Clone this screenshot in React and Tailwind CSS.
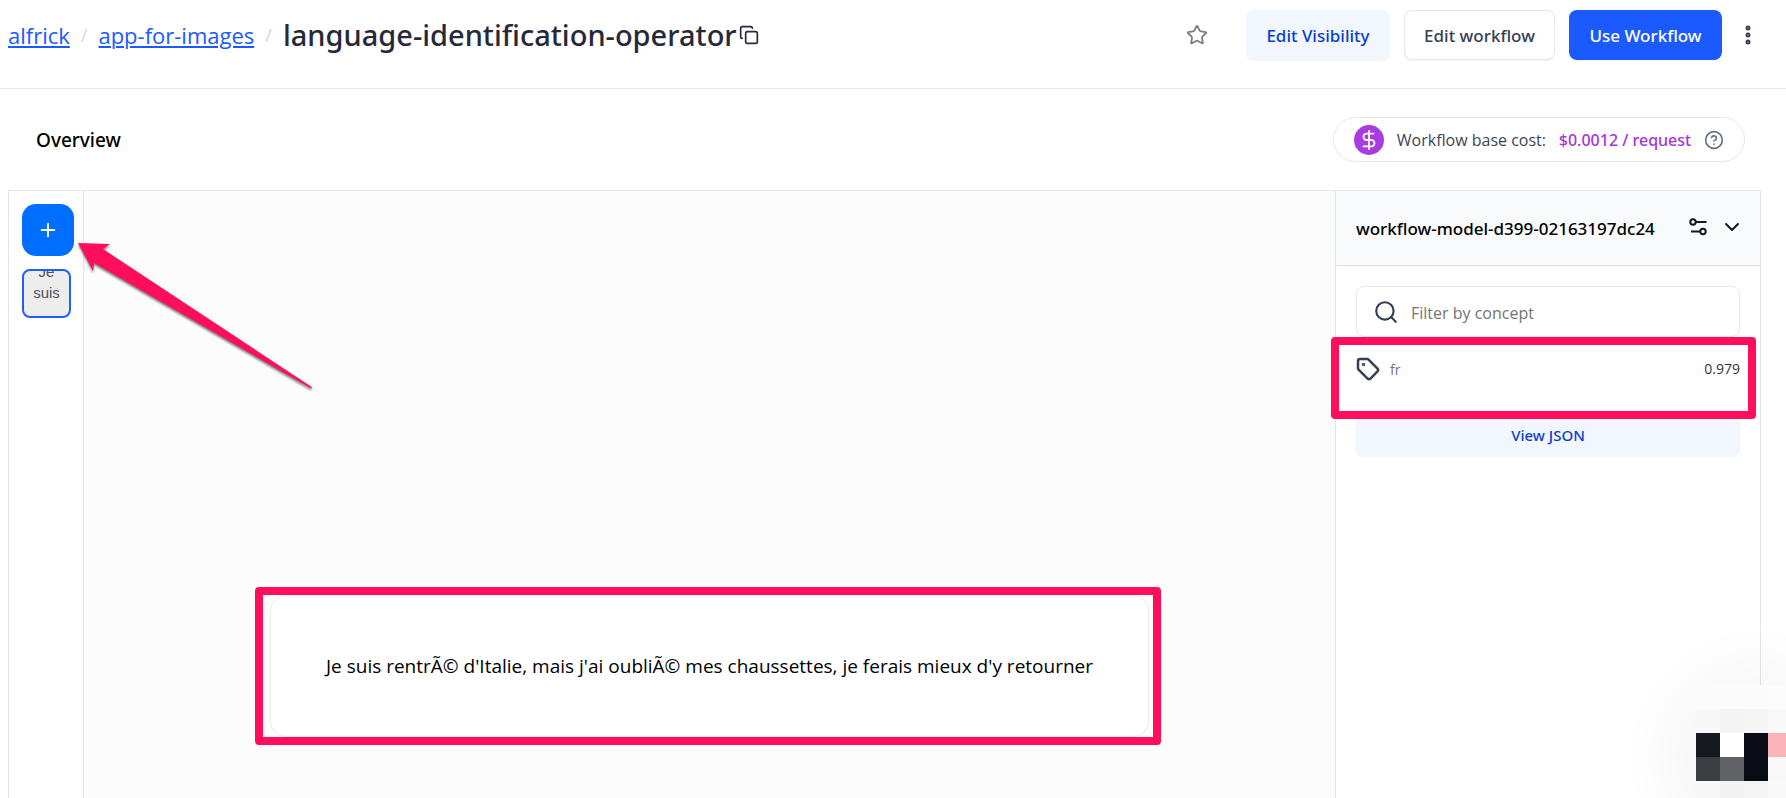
import { Star, Copy, EllipsisVertical, CircleHelp, DollarSign, Plus, ChevronDown, Search, Tag } from "lucide-react";

const mosaic = [
  ["bg-[#fbfbfb]", "bg-[#fbfbfb]", "bg-[#fbfbfb]", "bg-[#fcfcfc]"],
  ["bg-[#f7f7f7]", "bg-[#f3f3f3]", "bg-[#f5f5f5]", "bg-[#f9f9f9]"],
  ["bg-[#171921]", "bg-white", "bg-[#090c14]", "bg-[#fab4b7]"],
  ["bg-[#3c3d42]", "bg-[#616267]", "bg-[#090c14]", "bg-[#f8f8f8]"],
  ["bg-[#f7f7f7]", "bg-[#f2f2f2]", "bg-[#f5f5f5]", "bg-[#f9f9f9]"],
];

function Header() {
  return (
    <header className="flex h-[89px] items-start justify-between border-b border-[#e8e8ea] pt-[10px] pr-[26px] pl-2">
      <nav aria-label="Breadcrumb" className="flex h-[50px] items-center gap-[11px] text-[22px] whitespace-nowrap">
        <a href="#alfrick" className="text-[#1a5aff] underline decoration-2 underline-offset-2">alfrick</a>
        <span className="text-lg text-[#d6d6da]">/</span>
        <a href="#app" className="text-[#1a5aff] underline decoration-2 underline-offset-2">app-for-images</a>
        <span className="text-lg text-[#d6d6da]">/</span>
        <div className="flex items-center gap-0.5">
          <h1 className="font-['Noto_Sans',sans-serif] text-[29px] font-medium text-[#272838]">language-identification-operator</h1>
          <button aria-label="Copy"><Copy className="size-5 text-[#272838]" /></button>
        </div>
      </nav>
      <div className="flex items-center gap-[14px] font-['Noto_Sans',sans-serif] text-[17px] font-medium whitespace-nowrap">
        <button aria-label="Star" className="mr-6"><Star className="size-[22px] text-[#7d7d7d]" /></button>
        <button className="h-[50px] w-[144px] rounded-lg bg-[#f1f6ff] pt-0.5 text-[#0a3fcf] shadow-xs">Edit Visibility</button>
        <button className="h-[50px] w-[151px] rounded-lg border border-[#e5e7eb] bg-white pt-0.5 text-[#344054] shadow-xs">Edit workflow</button>
        <button className="h-[50px] w-[153px] rounded-lg bg-[#1a5aff] pt-0.5 text-white">Use Workflow</button>
        <button aria-label="More"><EllipsisVertical className="size-6 text-[#344054]" strokeWidth={3} /></button>
      </div>
    </header>
  );
}

function SlidersIcon() {
  return (
    <svg aria-hidden="true" viewBox="0 0 20 20" className="size-5" fill="none" stroke="currentColor" strokeWidth="2">
      <circle cx="5" cy="5" r="2.700" />
      <path d="M7.700 5h10.800M3 14.500h9.500" />
      <circle cx="15" cy="14.500" r="2.700" />
    </svg>
  );
}

function ConceptPanel() {
  return (
    <aside className="w-[425px] shrink-0 border-l border-[#e2e4e9]">
      <div className="flex h-[75px] items-center justify-between border-b border-[#dcdfea] bg-[#f8fafc] px-5">
        <h2 className="pt-0.5 font-['Noto_Sans',sans-serif] text-[17px] font-medium text-black">workflow-model-d399-02163197dc24</h2>
        <div className="-mr-1 flex items-center gap-3 pb-0.5 text-[#111827]">
          <button aria-label="Settings"><SlidersIcon /></button>
          <button aria-label="Collapse"><ChevronDown className="size-6" /></button>
        </div>
      </div>
      <div className="px-5 pt-5">
        <label className="flex h-[51px] items-center gap-3 rounded-lg border border-[#e5e7eb] px-4">
          <Search className="size-[26px] text-[#344054]" />
          <input aria-label="Filter by concept" placeholder="Filter by concept" className="min-w-0 flex-1 pt-0.5 text-base outline-none placeholder:text-[#757575]" />
        </label>
        <div className="relative flex h-[75px] items-start justify-between pt-5">
          <div className="flex items-center gap-[10px]">
            <Tag className="size-6 text-[#344054]" strokeWidth={2.5} />
            <span className="pt-0.5 text-sm text-[#697586]">fr</span>
          </div>
          <span className="text-sm leading-6 text-[#2c3442]">0.979</span>
          <div className="pointer-events-none absolute -inset-x-[25px] top-0 -right-4 h-[82px] rounded border-8 border-[#ff0f5b]" />
        </div>
        <button className="h-11 w-full rounded-lg bg-[#f1f6ff] pt-0.5 font-['Noto_Sans',sans-serif] text-[15px] font-medium text-[#0a3fcf] shadow-xs">View JSON</button>
      </div>
    </aside>
  );
}

export default function App() {
  return (
    <div className="relative flex h-screen flex-col overflow-hidden bg-white font-['Open_Sans','Noto_Sans',sans-serif]">
      <Header />
      <div className="flex h-[101px] shrink-0 items-center justify-between pr-[41px] pl-9">
        <h2 className="pt-0.5 font-['Noto_Sans',sans-serif] text-[19px] font-medium text-black">Overview</h2>
        <div className="flex h-[45px] w-[412px] items-center justify-between rounded-full border border-[#e5e7eb] px-5 text-base whitespace-nowrap">
          <span className="flex size-[30px] items-center justify-center rounded-full bg-[#a93be0]">
            <DollarSign className="size-[22px] text-white" />
          </span>
          <span className="text-[#3c4656]">Workflow base cost:</span>
          <span className="font-['Noto_Sans',sans-serif] font-medium text-[#a335da]">$0.0012 / request</span>
          <CircleHelp className="size-5 text-[#667085]" />
        </div>
      </div>
      <div className="mr-[25px] ml-2 flex flex-1 border-x border-t border-[#e2e4e9]">
        <div className="relative flex w-[75px] shrink-0 flex-col gap-[13px] border-r border-[#e2e4e9] pt-[13px] pl-[13px]">
          <button aria-label="Add input" className="flex size-[52px] items-center justify-center rounded-[14px] bg-[#006fff] text-white">
            <Plus className="size-[22px]" />
          </button>
          <button className="flex size-[49px] flex-col justify-start overflow-hidden rounded-lg border-2 border-[#1f5eff] bg-[#ededed] font-['Liberation_Sans',sans-serif] text-[15px] text-[#514f63]">
            <span className="-mt-[10px] block w-full text-center leading-[21px]">Je<br />suis</span>
          </button>
          <svg aria-hidden="true" viewBox="0 0 240 154" className="absolute top-[50px] left-[67px] z-10 h-[154px] w-[240px] overflow-visible drop-shadow-[0_2px_1px_rgba(0,0,0,0.5)]">
            <path d="M2 2 34 3 27 8 235 145.500Q237 148 234 147L18 22 17 30Z" fill="#ff0f5b" />
          </svg>
        </div>
        <main className="flex flex-1 items-start justify-center bg-[#fcfcfc] pt-[404px]">
          <div className="relative flex h-[142px] w-[879px] items-center justify-center rounded-2xl border border-[#ededee] bg-white">
            <p className="text-[19px] text-black">Je suis rentrÃ© d'Italie, mais j'ai oubliÃ© mes chaussettes, je ferais mieux d'y retourner</p>
            <div className="pointer-events-none absolute -inset-x-4 -inset-y-[9px] -right-[13px] rounded border-8 border-[#ff0f5b]" />
          </div>
        </main>
        <ConceptPanel />
      </div>
      <div className="absolute right-0 bottom-0 h-[172px] w-[160px] overflow-hidden bg-[radial-gradient(circle_at_130px_130px,rgba(0,0,0,0.035)_50px,transparent_130px)] pt-[59px] pl-[70px]">
        <div className="grid w-24 grid-cols-4">
          {mosaic.flat().map((color, i) => (
            <span key={i} className={`h-6 ${color}`} />
          ))}
        </div>
      </div>
    </div>
  );
}
